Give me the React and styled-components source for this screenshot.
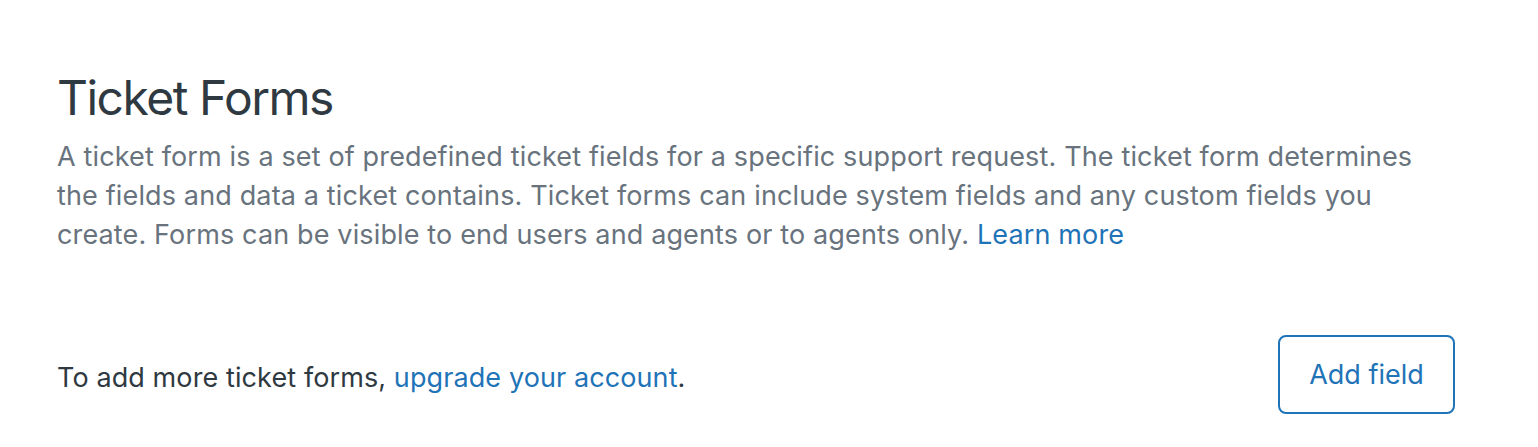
import React from "react"
import styled, { createGlobalStyle } from "styled-components"

const GlobalStyle = createGlobalStyle`
  body {
    margin: 0;
    background: #fff;
    font-family: Inter, "Liberation Sans", sans-serif;
  }
`

const Page = styled.div`
  padding: 66px 83px 0 57px;
`

const Title = styled.h1`
  margin: 0;
  font-size: 48px;
  font-weight: 400;
  line-height: 64px;
  letter-spacing: -1.5px;
  color: #2f3941;
`

const Description = styled.p`
  margin: 7px 0 0;
  font-size: 27px;
  line-height: 39px;
  letter-spacing: 0.14px;
  color: #68737d;
  max-width: 1390px;
`

const Link = styled.a`
  color: #1f73b7;
  text-decoration: none;
  cursor: pointer;
`

const Footer = styled.div`
  display: flex;
  align-items: center;
  justify-content: space-between;
  margin-top: 81px;
`

const Note = styled.p`
  margin: 0;
  padding-top: 5px;
  font-size: 27px;
  letter-spacing: 0.1px;
  color: #2f3941;
`

const Button = styled.button`
  width: 177px;
  height: 79px;
  border: 2px solid #1f73b7;
  border-radius: 8px;
  background: #fff;
  color: #1f73b7;
  font-family: inherit;
  font-size: 27px;
  cursor: pointer;
`

const App = () => (
  <>
    <GlobalStyle />
    <Page>
      <Title>Ticket Forms</Title>
      <Description>
        A ticket form is a set of predefined ticket fields for a specific support request. The ticket form determines
        the fields and data a ticket contains. Ticket forms can include system fields and any custom fields you
        create. Forms can be visible to end users and agents or to agents only. <Link>Learn more</Link>
      </Description>
      <Footer>
        <Note>
          To add more ticket forms, <Link>upgrade your account</Link>.
        </Note>
        <Button>Add field</Button>
      </Footer>
    </Page>
  </>
)

export default App
